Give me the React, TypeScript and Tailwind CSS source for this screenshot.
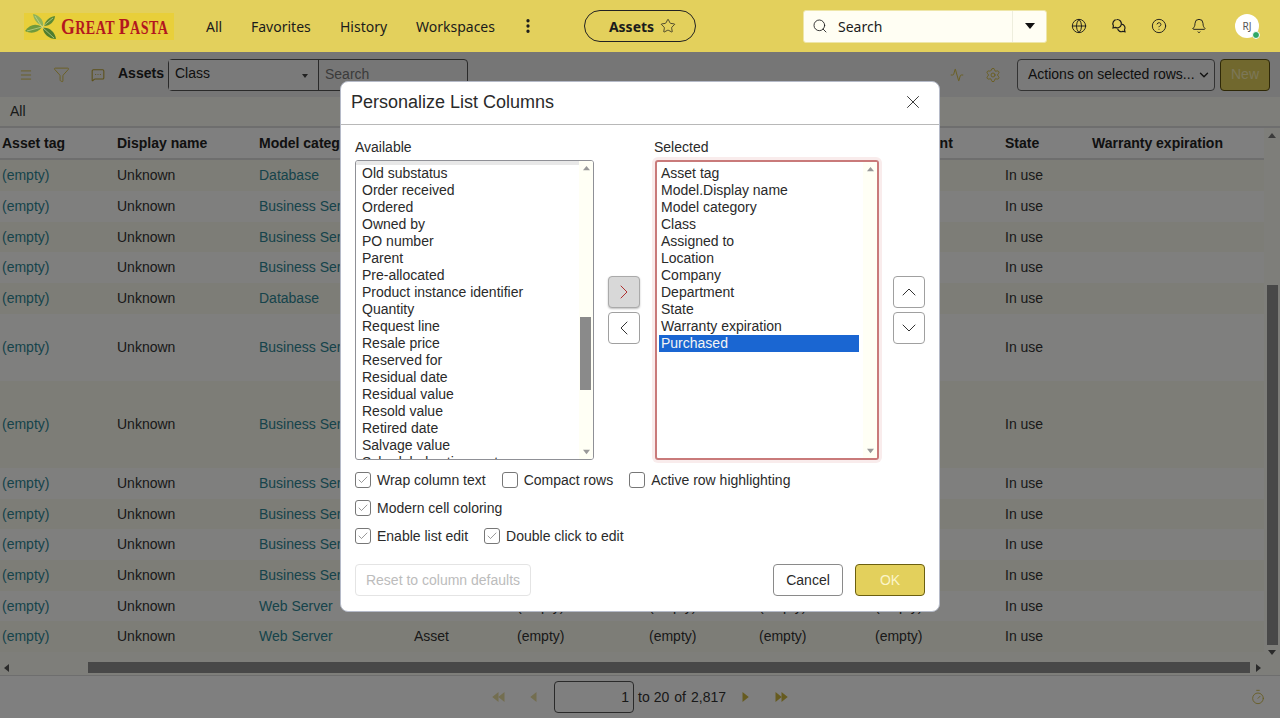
import { Activity, Bell, Check, ChevronDown, ChevronLeft, ChevronRight, ChevronUp, CircleHelp, EllipsisVertical, Funnel, Globe, Menu, MessageSquareMore, Search, Settings, Star, Timer, X } from 'lucide-react';

const columns = ['Asset tag', 'Display name', 'Model category', 'Class', 'Assigned to', 'Location', 'Company', 'Department', 'State', 'Warranty expiration'];

const rows = [
  { h: 'h-[31px]', cat: 'Database', odd: true },
  { h: 'h-[31px]', cat: 'Business Service', odd: false },
  { h: 'h-[30px]', cat: 'Business Service', odd: true },
  { h: 'h-[31px]', cat: 'Business Service', odd: false },
  { h: 'h-[31px]', cat: 'Database', odd: true },
  { h: 'h-[67px]', cat: 'Business Service', odd: false },
  { h: 'h-[87px]', cat: 'Business Service', odd: true },
  { h: 'h-[31px]', cat: 'Business Service', odd: false },
  { h: 'h-[30px]', cat: 'Business Service', odd: true },
  { h: 'h-[31px]', cat: 'Business Service', odd: false },
  { h: 'h-[31px]', cat: 'Business Service', odd: true },
  { h: 'h-[30px]', cat: 'Web Server', odd: false },
  { h: 'h-[31px]', cat: 'Web Server', odd: true },
];

const available = ['Old substatus', 'Order received', 'Ordered', 'Owned by', 'PO number', 'Parent', 'Pre-allocated', 'Product instance identifier', 'Quantity', 'Request line', 'Resale price', 'Reserved for', 'Residual date', 'Residual value', 'Resold value', 'Retired date', 'Salvage value', 'Scheduled active cost'];
const selected = ['Asset tag', 'Model.Display name', 'Model category', 'Class', 'Assigned to', 'Location', 'Company', 'Department', 'State', 'Warranty expiration'];

const gridCols = 'grid grid-cols-[115px_142px_155px_103px_132px_110px_116px_130px_87px_174px]';

function Logo() {
  return (
    <div className="flex h-[27px] w-[150px] items-center bg-[#e8cf3a]">
      <svg width="37" height="27" viewBox="0 0 37 27" className="shrink-0">
        <path d="M1 18 C6 11 12 10 18 14 C14 20 7 21 1 18 Z" fill="#6f9a3c" />
        <path d="M9 1 C15 2 20 7 19 13 C13 11 10 7 9 1 Z" fill="#8fb35a" />
        <path d="M31 3 C31 8 26 13 20 13 C21 8 25 4 31 3 Z" fill="#5d8a34" />
        <path d="M19 15 C25 14 31 19 32 26 C25 26 19 21 19 15 Z" fill="#4f7d2e" />
        <path d="M3 18 L18 14 L30 25 M18 14 L11 3 M18 14 L29 5" stroke="#c7d99a" strokeWidth="0.7" fill="none" />
      </svg>
      <span className="origin-left scale-x-[0.74] whitespace-nowrap font-['Liberation_Serif',serif] text-[19px] font-bold uppercase leading-none tracking-[0.6px] text-[#b3171f]">
        <span className="text-[24px]">G</span>reat <span className="text-[24px]">P</span>asta
      </span>
    </div>
  );
}

function ChatBubbles({ className }: { className?: string }) {
  return (
    <svg viewBox="0 0 16 16" fill="none" stroke="currentColor" strokeWidth="1.2" className={className}>
      <path d="M6 1.5a4.2 4.2 0 0 0-3.6 6.3L2 10l2.2-.6A4.2 4.2 0 1 0 6 1.5Z" />
      <path d="M10.6 6.2a3.7 3.7 0 0 1 2.9 5.6l.5 2-2-.5a3.7 3.7 0 0 1-5.4-2.6" />
    </svg>
  );
}

function TopBar() {
  return (
    <header className="flex h-[52px] shrink-0 items-center bg-[#e3d05c] pl-[24px] font-['Noto_Sans',sans-serif] text-[14px] text-[#1b1b1b]">
      <Logo />
      <nav className="ml-[32px] flex w-[378px] shrink-0 items-center">
        <span className="w-[45px]">All</span>
        <span className="w-[89px]">Favorites</span>
        <span className="w-[76px]">History</span>
        <span className="w-[103px]">Workspaces</span>
        <EllipsisVertical className="h-[18px] w-[18px]" strokeWidth={2.4} />
      </nav>
      <div className="flex h-[32px] w-[112px] shrink-0 items-center justify-center gap-[6px] rounded-full border border-[#222] pl-[5px] font-bold">
        Assets
        <Star className="h-[16px] w-[16px]" strokeWidth={1.1} />
      </div>
      <div className="ml-[107px] flex h-[33px] w-[244px] shrink-0 items-center rounded-[3px] border border-[#eee6a8] bg-[#fffef3]">
        <Search className="ml-[8px] h-[16px] w-[16px]" strokeWidth={1.3} />
        <span className="ml-[10px] flex-1">Search</span>
        <div className="flex h-full w-[34px] items-center justify-center border-l border-[#eeeedd]">
          <div className="h-0 w-0 border-x-[5px] border-t-[6px] border-x-transparent border-t-[#111]" />
        </div>
      </div>
      <div className="ml-[24px] flex items-center gap-[24px]">
        <Globe className="h-[16px] w-[16px]" strokeWidth={1.4} />
        <ChatBubbles className="h-[16px] w-[16px]" />
        <CircleHelp className="h-[16px] w-[16px]" strokeWidth={1.4} />
        <Bell className="h-[16px] w-[16px]" strokeWidth={1.4} />
      </div>
      <div className="relative ml-[28px] flex h-[24px] w-[24px] items-center justify-center rounded-full bg-white text-[10px] text-[#555]">
        RJ
        <span className="absolute -bottom-[1px] -right-[1px] h-[8px] w-[8px] rounded-full border border-white bg-[#2fa866]" />
      </div>
    </header>
  );
}

function Toolbar() {
  return (
    <div className="flex h-[45px] shrink-0 items-center bg-[#ececec] pl-[19px] pr-[10px] text-[#222]">
      <Menu className="h-[14px] w-[14px] text-[#d4bc40]" strokeWidth={1.5} />
      <Funnel className="ml-[20px] h-[17px] w-[17px] text-[#d4bc40]" strokeWidth={1.3} />
      <MessageSquareMore className="ml-[21px] h-[14px] w-[14px] text-[#b8a030]" strokeWidth={1.8} />
      <span className="ml-[13px] w-[50px] pb-[2px] text-[14px] font-bold">Assets</span>
      <div className="flex h-[32px] w-[300px] rounded-[4px] border border-[#555] text-[14px]">
        <div className="flex w-[150px] items-center justify-between border-r border-[#555] bg-[#f5f5f5] pb-[2px] pl-[6px] pr-[10px]">
          Class
          <div className="mt-[5px] h-0 w-0 border-x-[3px] border-t-[4px] border-x-transparent border-t-[#444]" />
        </div>
        <div className="flex flex-1 items-center pl-[6px] text-[#777]">Search</div>
      </div>
      <Activity className="ml-[482px] h-[14px] w-[14px] text-[#d4bc40]" strokeWidth={1.6} />
      <Settings className="ml-[21px] h-[16px] w-[16px] text-[#d4bc40]" strokeWidth={1.4} />
      <div className="ml-[16px] flex h-[32px] w-[198px] items-center justify-between rounded-[4px] border border-[#666] bg-[#f5f5f5] pl-[10px] pr-[3px] text-[14px]">
        Actions on selected rows...
        <ChevronDown className="h-[14px] w-[14px]" strokeWidth={2.4} />
      </div>
      <div className="ml-[5px] flex h-[32px] w-[50px] items-center justify-center rounded-[4px] border border-[#5c5110] bg-[#e3d05c] text-[14px] text-[#f8eeb0]">New</div>
    </div>
  );
}

function Triangle({ dir, className }: { dir: 'up' | 'down' | 'left' | 'right'; className?: string }) {
  const d = { up: 'M0 6 L4 1 L8 6 Z', down: 'M0 2 L8 2 L4 7 Z', left: 'M6 0 L6 8 L1 4 Z', right: 'M2 0 L2 8 L7 4 Z' }[dir];
  return (
    <svg viewBox="0 0 8 8" className={className} fill="currentColor">
      <path d={d} />
    </svg>
  );
}

function DataTable() {
  return (
    <div className="flex h-[621px] flex-col bg-[#fdfdf4] font-['Liberation_Sans',sans-serif] text-[14px] text-[#333]">
      <div className="flex h-[31px] shrink-0 items-center border-b-2 border-[#ddd] pl-[10px]">All</div>
      <div className="flex min-h-0 flex-1">
        <div className="w-[1264px] shrink-0">
          <div className={`${gridCols} h-[32px] items-center border-b-2 border-[#ddd] bg-white font-bold text-[#222]`}>
            {columns.map((c) => (
              <div key={c} className="overflow-hidden whitespace-nowrap pl-[2px]">{c}</div>
            ))}
          </div>
          {rows.map((r, i) => (
            <div key={i} className={`${gridCols} ${r.h} items-center ${r.odd ? 'bg-[#fbfbef]' : 'bg-[#fefefc]'}`}>
              <div className="pl-[2px] text-[#2e8796]">(empty)</div>
              <div className="pl-[2px]">Unknown</div>
              <div className="overflow-hidden whitespace-nowrap pl-[2px] text-[#2e8796]">{r.cat}</div>
              <div className="pl-[2px]">Asset</div>
              <div className="pl-[2px]">(empty)</div>
              <div className="pl-[2px]">(empty)</div>
              <div className="pl-[2px]">(empty)</div>
              <div className="pl-[2px]">(empty)</div>
              <div className="pl-[2px]">In use</div>
              <div />
            </div>
          ))}
          <div className="mt-[9px] flex h-[13px] items-center">
            <Triangle dir="left" className="ml-[3px] h-[8px] w-[8px] text-[#555]" />
            <div className="ml-[77px] h-[11px] w-[1162px] bg-[#909090]" />
            <Triangle dir="right" className="ml-[4px] h-[8px] w-[8px] text-[#555]" />
          </div>
        </div>
        <div className="flex w-[16px] flex-col items-center pt-[4px]">
          <Triangle dir="up" className="h-[8px] w-[8px] text-[#777]" />
          <div className="mt-[145px] h-[360px] w-[11px] shrink-0 bg-[#909090]" />
          <Triangle dir="down" className="mt-[3px] h-[8px] w-[8px] text-[#555]" />
        </div>
      </div>
      <div className="flex h-[43px] shrink-0 items-center border-t border-[#ddd] bg-white">
        <Triangle dir="left" className="ml-[491px] h-[10px] w-[10px] text-[#e6dca0]" />
        <Triangle dir="left" className="-ml-[4px] h-[10px] w-[10px] text-[#e6dca0]" />
        <Triangle dir="left" className="ml-[22px] h-[10px] w-[10px] text-[#e6dca0]" />
        <div className="ml-[15px] flex h-[32px] w-[80px] items-center justify-end rounded-[4px] border border-[#555] pr-[4px]">1</div>
        <span className="ml-[4px]">to</span>
        <span className="ml-[4px]">20</span>
        <span className="ml-[5px]">of</span>
        <span className="ml-[5px]">2,817</span>
        <Triangle dir="right" className="ml-[14px] h-[10px] w-[10px] text-[#cdb740]" />
        <Triangle dir="right" className="ml-[23px] h-[10px] w-[10px] text-[#cdb740]" />
        <Triangle dir="right" className="-ml-[4px] h-[10px] w-[10px] text-[#cdb740]" />
        <Timer className="ml-[461px] h-[16px] w-[16px] text-[#cdb740]" strokeWidth={1.3} />
      </div>
    </div>
  );
}

function Checkbox({ label, checked }: { label: string; checked?: boolean }) {
  return (
    <label className="flex items-center gap-[6px]">
      <span className="flex h-[16px] w-[16px] items-center justify-center rounded-[3px] border border-[#777] bg-white">
        {checked && <Check className="h-[12px] w-[12px] text-[#555]" strokeWidth={1.2} />}
      </span>
      {label}
    </label>
  );
}

function ListScrollbar({ children }: { children?: React.ReactNode }) {
  return (
    <div className="relative flex w-[14px] shrink-0 flex-col items-center justify-between bg-[#fffff5] py-[4px] text-[#999]">
      <Triangle dir="up" className="h-[7px] w-[7px]" />
      {children}
      <Triangle dir="down" className="h-[7px] w-[7px]" />
    </div>
  );
}

function SquareButton({ children, active }: { children: React.ReactNode; active?: boolean }) {
  return (
    <button className={`flex h-[32px] w-[32px] items-center justify-center rounded-[4px] border ${active ? 'border-[#aaa] bg-[#d8d8d8] text-[#b03030] shadow-[0_1px_2px_rgba(0,0,0,0.25)]' : 'border-[#a0a0a0] bg-white text-[#333]'}`}>
      {children}
    </button>
  );
}

function PersonalizeDialog() {
  return (
    <div className="absolute left-[340px] top-[29px] flex h-[531px] w-[600px] flex-col rounded-[8px] border border-[#b5bac8] bg-white font-['Liberation_Sans',sans-serif] text-[14px] text-[#2a2a2a]">
      <div className="flex h-[43px] shrink-0 items-center justify-between border-b border-[#b8b8b8] pb-[2px] pl-[10px] pr-[15px]">
        <h1 className="text-[18px] font-normal">Personalize List Columns</h1>
        <X className="h-[22px] w-[22px]" strokeWidth={1} />
      </div>
      <div className="flex px-[14px] pt-[14px]">
        <div className="w-[239px]">
          <div className="mb-[4px] h-[17px] leading-[17px]">Available</div>
          <div className="flex h-[300px] overflow-hidden rounded-[3px] border border-[#8f9096]">
            <div className="min-w-0 flex-1 overflow-hidden">
              <div className="h-[4px] bg-[#e8e8e8]" />
              {available.map((a) => (
                <div key={a} className="h-[17px] whitespace-nowrap pl-[6px] leading-[17px]">{a}</div>
              ))}
            </div>
            <ListScrollbar>
              <div className="absolute left-[1px] top-[156px] h-[73px] w-[11px] bg-[#8a8a8a]" />
            </ListScrollbar>
          </div>
        </div>
        <div className="ml-[14px] mt-[137px] flex w-[32px] flex-col gap-[4px]">
          <SquareButton active><ChevronRight className="h-[24px] w-[24px]" strokeWidth={1} /></SquareButton>
          <SquareButton><ChevronLeft className="h-[24px] w-[24px]" strokeWidth={1} /></SquareButton>
        </div>
        <div className="ml-[15px] w-[224px]">
          <div className="-ml-[1px] mb-[4px] h-[17px] leading-[17px]">Selected</div>
          <div className="flex h-[300px] overflow-hidden rounded-[3px] border-2 border-[#c97a7a] shadow-[0_0_0_3px_#f9ecec]">
            <div className="min-w-0 flex-1 pl-[2px] pr-[4px] pt-[3px]">
              {selected.map((s) => (
                <div key={s} className="h-[17px] whitespace-nowrap pl-[2px] leading-[17px]">{s}</div>
              ))}
              <div className="h-[17px] bg-[#1a66d2] pl-[2px] leading-[17px] text-[#f4f4f4]">Purchased</div>
            </div>
            <ListScrollbar />
          </div>
        </div>
        <div className="ml-[14px] mt-[137px] flex w-[32px] flex-col gap-[4px]">
          <SquareButton><ChevronUp className="h-[24px] w-[24px]" strokeWidth={1} /></SquareButton>
          <SquareButton><ChevronDown className="h-[24px] w-[24px]" strokeWidth={1} /></SquareButton>
        </div>
      </div>
      <div className="flex flex-col gap-[12px] px-[14px] pt-[12px]">
        <div className="flex h-[16px] gap-[16px]">
          <Checkbox label="Wrap column text" checked />
          <Checkbox label="Compact rows" />
          <Checkbox label="Active row highlighting" />
        </div>
        <div className="flex h-[16px]">
          <Checkbox label="Modern cell coloring" checked />
        </div>
        <div className="flex h-[16px] gap-[16px]">
          <Checkbox label="Enable list edit" checked />
          <Checkbox label="Double click to edit" checked />
        </div>
      </div>
      <div className="flex items-center px-[14px] pt-[20px]">
        <button className="h-[32px] w-[176px] rounded-[4px] border border-[#e4e4e4] text-[#bcbcbc]">Reset to column defaults</button>
        <button className="ml-auto h-[32px] w-[70px] rounded-[4px] border border-[#8a8a8a] bg-white">Cancel</button>
        <button className="ml-[12px] h-[32px] w-[70px] rounded-[4px] border border-[#6b5f10] bg-[#e3d05c] text-[#fbf5c9]">OK</button>
      </div>
    </div>
  );
}

export default function App() {
  return (
    <div className="flex h-[718px] w-[1280px] flex-col overflow-hidden bg-white">
      <TopBar />
      <main className="relative min-h-0 flex-1 font-['Liberation_Sans',sans-serif]">
        <Toolbar />
        <DataTable />
        {/* modal backdrop */}
        <div className="absolute inset-0 bg-black/50" />
        <PersonalizeDialog />
      </main>
    </div>
  );
}
